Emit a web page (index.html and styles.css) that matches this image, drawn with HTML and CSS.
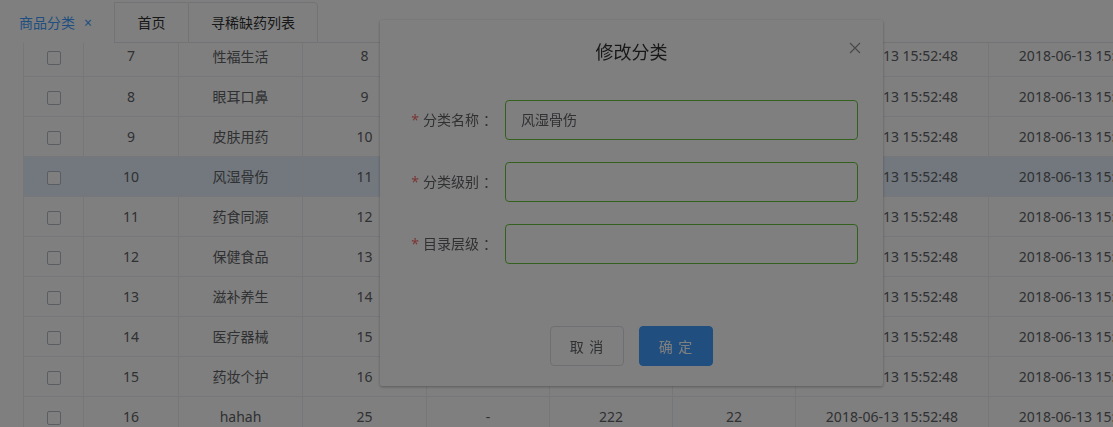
FILE: index.html
```html
<!DOCTYPE html>
<html lang="zh-CN">
<head>
<meta charset="utf-8">
<title>商品分类</title>
<link rel="stylesheet" href="styles.css">
</head>
<body>
<div class="page">
  <div class="tabs">
    <div class="tab tab-active">商品分类<span class="tab-close">×</span></div>
    <div class="tab tab-first">首页</div>
    <div class="tab tab-last">寻稀缺药列表</div>
    <div class="tabs-fill"></div>
  </div>
  <div class="table-wrap">
    <table class="grid">
      <colgroup>
        <col class="c-check"><col class="c-id"><col class="c-name"><col class="c-num">
        <col class="c-mid"><col class="c-mid"><col class="c-mid"><col class="c-date"><col class="c-date">
      </colgroup>
      <tbody>
        <tr><td><span class="cb"></span></td><td>7</td><td>性福生活</td><td>8</td><td>-</td><td>222</td><td>22</td><td>2018-06-13 15:52:48</td><td>2018-06-13 15:52:48</td></tr>
        <tr><td><span class="cb"></span></td><td>8</td><td>眼耳口鼻</td><td>9</td><td>-</td><td>222</td><td>22</td><td>2018-06-13 15:52:48</td><td>2018-06-13 15:52:48</td></tr>
        <tr><td><span class="cb"></span></td><td>9</td><td>皮肤用药</td><td>10</td><td>-</td><td>222</td><td>22</td><td>2018-06-13 15:52:48</td><td>2018-06-13 15:52:48</td></tr>
        <tr class="row-hover"><td><span class="cb"></span></td><td>10</td><td>风湿骨伤</td><td>11</td><td>-</td><td>222</td><td>22</td><td>2018-06-13 15:52:48</td><td>2018-06-13 15:52:48</td></tr>
        <tr><td><span class="cb"></span></td><td>11</td><td>药食同源</td><td>12</td><td>-</td><td>222</td><td>22</td><td>2018-06-13 15:52:48</td><td>2018-06-13 15:52:48</td></tr>
        <tr><td><span class="cb"></span></td><td>12</td><td>保健食品</td><td>13</td><td>-</td><td>222</td><td>22</td><td>2018-06-13 15:52:48</td><td>2018-06-13 15:52:48</td></tr>
        <tr><td><span class="cb"></span></td><td>13</td><td>滋补养生</td><td>14</td><td>-</td><td>222</td><td>22</td><td>2018-06-13 15:52:48</td><td>2018-06-13 15:52:48</td></tr>
        <tr><td><span class="cb"></span></td><td>14</td><td>医疗器械</td><td>15</td><td>-</td><td>222</td><td>22</td><td>2018-06-13 15:52:48</td><td>2018-06-13 15:52:48</td></tr>
        <tr><td><span class="cb"></span></td><td>15</td><td>药妆个护</td><td>16</td><td>-</td><td>222</td><td>22</td><td>2018-06-13 15:52:48</td><td>2018-06-13 15:52:48</td></tr>
        <tr><td><span class="cb"></span></td><td>16</td><td>hahah</td><td>25</td><td>-</td><td>222</td><td>22</td><td>2018-06-13 15:52:48</td><td>2018-06-13 15:52:48</td></tr>
      </tbody>
    </table>
  </div>
</div>

<div class="dialog">
  <div class="dialog-header">
    <span class="dialog-title">修改分类</span>
    <span class="dialog-close">
      <svg width="12" height="12" viewBox="0 0 12 12"><path d="M1 1L11 11M11 1L1 11" stroke="#909399" stroke-width="1.2" fill="none"/></svg>
    </span>
  </div>
  <div class="dialog-body">
    <div class="form-item">
      <label class="form-label"><span class="req">*</span>分类名称<span class="colon">：</span></label>
      <div class="input">风湿骨伤</div>
    </div>
    <div class="form-item">
      <label class="form-label"><span class="req">*</span>分类级别<span class="colon">：</span></label>
      <div class="input"></div>
    </div>
    <div class="form-item">
      <label class="form-label"><span class="req">*</span>目录层级<span class="colon">：</span></label>
      <div class="input"></div>
    </div>
  </div>
  <div class="dialog-footer">
    <button class="btn">取 消</button>
    <button class="btn btn-primary">确 定</button>
  </div>
</div>

<div class="mask"></div>
</body>
</html>
```

FILE: styles.css
```css
* { box-sizing: border-box; }
html, body {
  margin: 0;
  padding: 0;
  width: 1113px;
  height: 427px;
  overflow: hidden;
  background: #ffffff;
  font-family: "Noto Sans", "Noto Sans CJK SC", sans-serif;
  font-size: 14px;
  color: #606266;
}
.page {
  width: 1113px;
  height: 427px;
  overflow: hidden;
}
.tabs {
  display: flex;
  padding-top: 2px;
  height: 43px;
}
.tab {
  flex: none;
  height: 41px;
  line-height: 40px;
  padding: 0;
  text-align: center;
  color: #303133;
  border-top: 1px solid #e4e7ed;
  border-left: 1px solid #e4e7ed;
  border-bottom: 1px solid #e4e7ed;
  white-space: nowrap;
}
.tab-active {
  width: 114px;
  padding: 0 0 0 19px;
  text-align: left;
  color: #409eff;
  border-top-color: transparent;
  border-left: none;
  border-bottom-color: transparent;
}
.tab-close {
  font-size: 14px;
  margin-left: 9px;
  color: #409eff;
}
.tab-first { width: 74px; }
.tab-last {
  width: 130px;
  border-right: 1px solid #e4e7ed;
  border-top-right-radius: 4px;
}
.tabs-fill {
  flex: 1;
  height: 41px;
  border-bottom: 1px solid #e4e7ed;
}
.table-wrap {
  height: 385px;
  overflow: hidden;
  padding-left: 23px;
}
.grid {
  margin-top: -7px;
  border-collapse: collapse;
  table-layout: fixed;
  width: 1158px;
  border-left: 1px solid #ebeef5;
}
.c-check { width: 60px; }
.c-id { width: 95px; }
.c-name { width: 124px; }
.c-num { width: 124px; }
.c-mid { width: 123px; }
.c-date { width: 193px; }
.grid td {
  height: 40px;
  padding: 0;
  text-align: center;
  white-space: nowrap;
  overflow: hidden;
  border-right: 1px solid #ebeef5;
  border-bottom: 1px solid #ebeef5;
  color: #606266;
}
.row-hover td { background: #e4f0fb; }
.cb {
  display: inline-block;
  width: 14px;
  height: 14px;
  border: 1px solid #b4bac6;
  border-radius: 2px;
  background: #fff;
  vertical-align: middle;
}
.dialog {
  position: fixed;
  left: 380px;
  top: 20px;
  width: 503px;
  background: #ffffff;
  border-radius: 2px;
  box-shadow: 0 1px 3px rgba(0, 0, 0, 0.3);
}
.dialog-header {
  position: relative;
  height: 54px;
  padding: 20px 20px 10px;
  text-align: center;
}
.dialog-title {
  display: block;
  font-size: 18px;
  line-height: 24px;
  color: #303133;
}
.dialog-close {
  position: absolute;
  top: 22px;
  right: 22px;
  width: 12px;
  height: 12px;
  display: flex;
}
.dialog-body {
  padding: 26px 25px 30px 20px;
}
.form-item {
  display: flex;
  height: 40px;
  margin-bottom: 22px;
}
.form-label {
  width: 105px;
  height: 40px;
  padding-right: 12px;
  text-align: right;
  line-height: 40px;
  color: #606266;
  white-space: nowrap;
}
.colon {
  display: inline-block;
  width: 14px;
  padding-left: 4px;
  text-align: left;
  line-height: 40px;
  vertical-align: top;
}
.req {
  color: #f56c6c;
  margin-right: 4px;
}
.input {
  flex: 1;
  height: 40px;
  line-height: 38px;
  padding: 0 15px;
  border: 1px solid #67c23a;
  border-radius: 4px;
  color: #606266;
  background: #fff;
}
.dialog-footer {
  height: 70px;
  padding: 10px 20px 20px;
  display: flex;
  justify-content: center;
  gap: 15px;
}
.btn {
  width: 74px;
  height: 40px;
  font-family: inherit;
  font-size: 14px;
  letter-spacing: 1px;
  border: 1px solid #dcdfe6;
  border-radius: 4px;
  background: #fff;
  color: #606266;
  padding: 0;
}
.btn-primary {
  background: #409eff;
  border-color: #409eff;
  color: #fff;
}
.mask {
  position: fixed;
  left: 0;
  top: 0;
  right: 0;
  bottom: 0;
  background: rgba(0, 0, 0, 0.5);
}
```
